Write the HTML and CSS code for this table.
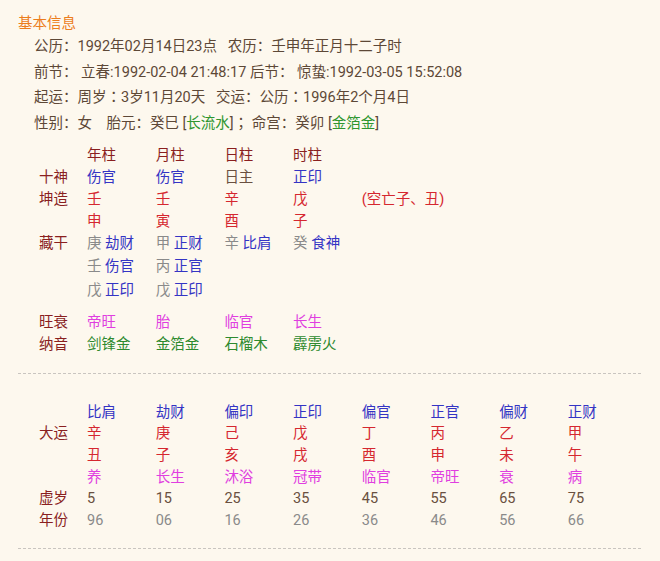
FILE: index.html
```html
<!DOCTYPE html>
<html lang="zh">
<head>
<meta charset="utf-8">
<link rel="stylesheet" href="styles.css">
</head>
<body>
<div class="page">
  <div class="title">基本信息</div>
  <div class="info">
    <p>公历：1992年02月14日23点&nbsp;&nbsp; 农历：壬申年正月十二子时</p>
    <p>前节： 立春:1992-02-04 21:48:17 后节： 惊蛰:1992-03-05 15:52:08</p>
    <p>起运：周岁<span class="c" lang="ja">：</span>3岁11月20天&nbsp;&nbsp; 交运：公历<span class="c" lang="ja">：</span>1996年2个月4日</p>
    <p>性别：女&nbsp;&nbsp;&nbsp; 胎元：癸巳 [<span class="g">长流水</span>]<span class="c" lang="ja">；</span> 命宫：癸卯 [<span class="g">金箔金</span>]</p>
  </div>

  <div class="chart">
    <div class="row"><span></span><span class="lb">年柱</span><span class="lb">月柱</span><span class="lb">日柱</span><span class="lb">时柱</span></div>
    <div class="row"><span class="lb">十神</span><span class="b">伤官</span><span class="b">伤官</span><span class="br">日主</span><span class="b">正印</span></div>
    <div class="row"><span class="lb">坤造</span><span class="r">壬</span><span class="r">壬</span><span class="r">辛</span><span class="r">戊</span><span class="r">(空亡子、丑)</span></div>
    <div class="row"><span></span><span class="r">申</span><span class="r">寅</span><span class="r">酉</span><span class="r">子</span></div>
    <div class="row"><span class="lb">藏干</span><span><i>庚</i> <b>劫财</b></span><span><i>甲</i> <b>正财</b></span><span><i>辛</i> <b>比肩</b></span><span><i>癸</i> <b>食神</b></span></div>
    <div class="row tall"><span></span><span><i>壬</i> <b>伤官</b></span><span><i>丙</i> <b>正官</b></span></div>
    <div class="row tall"><span></span><span><i>戊</i> <b>正印</b></span><span><i>戊</i> <b>正印</b></span></div>
    <div class="row gap"><span class="lb">旺衰</span><span class="m">帝旺</span><span class="m">胎</span><span class="m">临官</span><span class="m">长生</span></div>
    <div class="row"><span class="lb">纳音</span><span class="gr">剑锋金</span><span class="gr">金箔金</span><span class="gr">石榴木</span><span class="gr">霹雳火</span></div>
  </div>

  <div class="sep first"></div>

  <div class="chart dayun">
    <div class="row"><span></span><span class="b">比肩</span><span class="b">劫财</span><span class="b">偏印</span><span class="b">正印</span><span class="b">偏官</span><span class="b">正官</span><span class="b">偏财</span><span class="b">正财</span></div>
    <div class="row"><span class="lb">大运</span><span class="r">辛</span><span class="r">庚</span><span class="r">己</span><span class="r">戊</span><span class="r">丁</span><span class="r">丙</span><span class="r">乙</span><span class="r">甲</span></div>
    <div class="row"><span></span><span class="r">丑</span><span class="r">子</span><span class="r">亥</span><span class="r">戌</span><span class="r">酉</span><span class="r">申</span><span class="r">未</span><span class="r">午</span></div>
    <div class="row"><span></span><span class="m">养</span><span class="m">长生</span><span class="m">沐浴</span><span class="m">冠带</span><span class="m">临官</span><span class="m">帝旺</span><span class="m">衰</span><span class="m">病</span></div>
    <div class="row"><span class="lb">虚岁</span><span class="br">5</span><span class="br">15</span><span class="br">25</span><span class="br">35</span><span class="br">45</span><span class="br">55</span><span class="br">65</span><span class="br">75</span></div>
    <div class="row"><span class="lb">年份</span><span class="gy">96</span><span class="gy">06</span><span class="gy">16</span><span class="gy">26</span><span class="gy">36</span><span class="gy">46</span><span class="gy">56</span><span class="gy">66</span></div>
  </div>

  <div class="sep last"></div>
</div>
</body>
</html>
```

FILE: styles.css
```css
html, body {
  margin: 0;
  padding: 0;
  background: #fdf8ee;
}
body {
  font-family: Roboto, "Noto Sans CJK SC", sans-serif;
  font-size: 14.5px;
  color: #5d4837;
}
.page {
  width: 623px;
  padding: 14px 0 0 18px;
}
.title {
  color: #ec7d1c;
  line-height: 20px;
}
.info {
  padding-left: 16px;
}
.info p {
  margin: 0;
  height: 25.7px;
  line-height: 25.7px;
  white-space: nowrap;
}
.c {
  font-family: "Noto Sans CJK JP", sans-serif;
  line-height: 1;
}
.g { color: #2f962f; }

.chart {
  margin: 8px 0 0 21px;
}
.row {
  display: grid;
  grid-template-columns: 48px repeat(8, 68.7px);
  height: 22px;
  line-height: 22px;
  white-space: nowrap;
}
.row.tall {
  height: 24px;
  line-height: 24px;
}
.row.gap {
  margin-top: 9px;
}
.lb { color: #8a1f1f; }
.b, .row b { color: #3434c4; font-weight: normal; }
.r { color: #d5272f; }
.m { color: #e03ee0; }
.gr { color: #2e8a2e; }
.br { color: #6a5040; }
.gy { color: #8a8a8a; }
.row i { font-style: normal; color: #8a8a8a; }

.sep {
  border-top: 1px dashed #c9c5c0;
}
.sep.first { margin-top: 17px; }
.dayun { margin-top: 28px; }
.dayun .row {
  height: 21.6px;
  line-height: 21.6px;
}
.sep.last { margin-top: 17px; }
```
